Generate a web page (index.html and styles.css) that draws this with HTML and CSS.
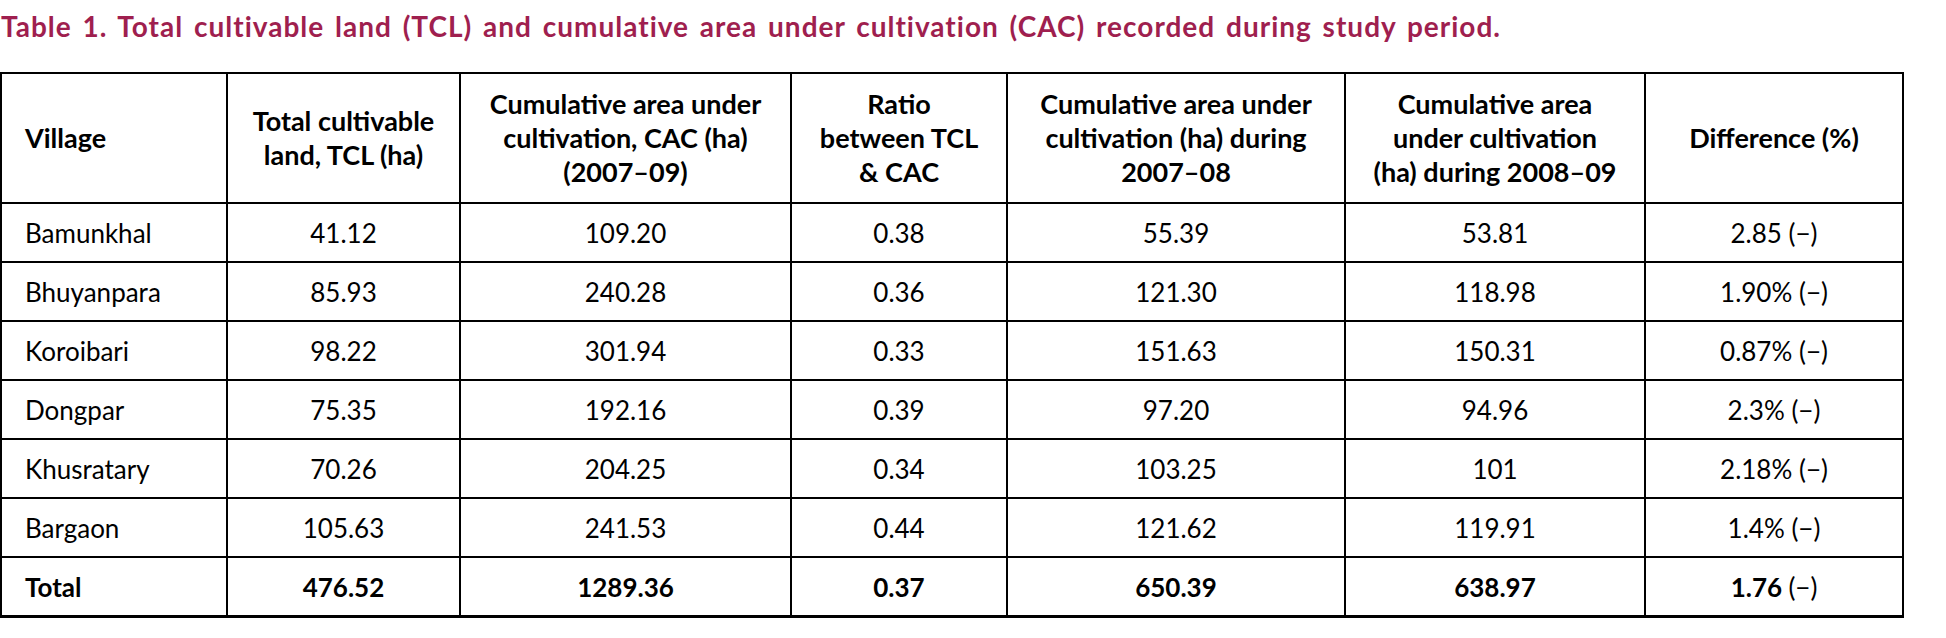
FILE: index.html
```html
<!DOCTYPE html>
<html>
<head>
<meta charset="utf-8">
<link rel="stylesheet" href="styles.css">
</head>
<body>
<h1 class="caption">Table 1. Total cultivable land (TCL) and cumulative area under cultivation (CAC) recorded during study period.</h1>
<table class="data">
  <colgroup>
    <col class="c1"><col class="c2"><col class="c3"><col class="c4"><col class="c5"><col class="c6"><col class="c7">
  </colgroup>
  <thead>
    <tr>
      <th class="left">Village</th>
      <th>Total cultivable<br>land, TCL (ha)</th>
      <th>Cumulative area under<br>cultivation, CAC (ha)<br>(2007–09)</th>
      <th>Ratio<br>between TCL<br>&amp; CAC</th>
      <th>Cumulative area under<br>cultivation (ha) during<br>2007–08</th>
      <th>Cumulative area<br>under cultivation<br>(ha) during 2008–09</th>
      <th>Difference (%)</th>
    </tr>
  </thead>
  <tbody>
    <tr><td class="left">Bamunkhal</td><td>41.12</td><td>109.20</td><td>0.38</td><td>55.39</td><td>53.81</td><td>2.85 (−)</td></tr>
    <tr><td class="left">Bhuyanpara</td><td>85.93</td><td>240.28</td><td>0.36</td><td>121.30</td><td>118.98</td><td>1.90% (−)</td></tr>
    <tr><td class="left">Koroibari</td><td>98.22</td><td>301.94</td><td>0.33</td><td>151.63</td><td>150.31</td><td>0.87% (−)</td></tr>
    <tr><td class="left">Dongpar</td><td>75.35</td><td>192.16</td><td>0.39</td><td>97.20</td><td>94.96</td><td>2.3% (−)</td></tr>
    <tr><td class="left">Khusratary</td><td>70.26</td><td>204.25</td><td>0.34</td><td>103.25</td><td>101</td><td>2.18% (−)</td></tr>
    <tr><td class="left">Bargaon</td><td>105.63</td><td>241.53</td><td>0.44</td><td>121.62</td><td>119.91</td><td>1.4% (−)</td></tr>
    <tr class="total"><td class="left">Total</td><td>476.52</td><td>1289.36</td><td>0.37</td><td>650.39</td><td>638.97</td><td>1.76 <span class="normal">(−)</span></td></tr>
  </tbody>
</table>
</body>
</html>
```
FILE: styles.css
```css
html, body {
  margin: 0;
  padding: 0;
  background: #fff;
}
body {
  font-family: "Lato", "Open Sans", sans-serif;
  color: #000;
}
.caption {
  margin: 0;
  padding: 9px 0 0 1px;
  height: 72px;
  box-sizing: border-box;
  font-size: 28px;
  line-height: 34px;
  font-weight: 700;
  letter-spacing: 1px;
  word-spacing: 3px;
  color: #9f1f4f;
  white-space: nowrap;
}
.data {
  border-collapse: collapse;
  table-layout: fixed;
  width: 1902px;
  font-size: 26px;
  border-top: 2px solid #333;
  border-bottom: 3px solid #000;
  box-shadow: 0 2px 0 #c8c8c8;
}
.c1 { width: 226px; }
.c2 { width: 233px; }
.c3 { width: 331px; }
.c4 { width: 216px; }
.c5 { width: 338px; }
.c6 { width: 300px; }
.c7 { width: 258px; }
.data th, .data td {
  border: 2px solid #000;
  text-align: center;
  vertical-align: middle;
  padding: 0 6px;
}
.data th {
  height: 128px;
  font-size: 27px;
  font-weight: 700;
  line-height: 34px;
}
.data td {
  height: 57px;
  font-weight: 400;
}
.data .left {
  text-align: left;
  padding-left: 23px;
}
.total td {
  font-weight: 700;
}
.total td .normal {
  font-weight: 400;
}
```
